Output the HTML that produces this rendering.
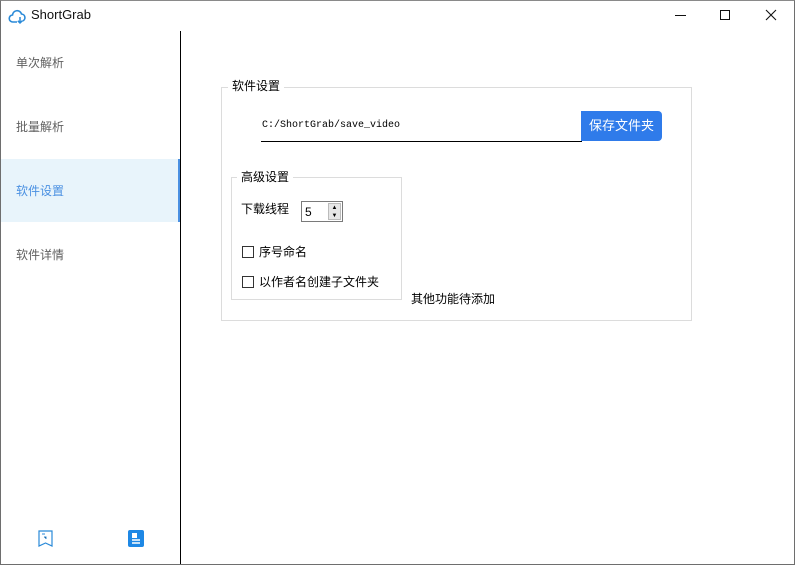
<!DOCTYPE html>
<html><head><meta charset="utf-8"><style>
*{margin:0;padding:0;box-sizing:border-box}
body{width:795px;height:565px;background:#fff;position:relative;overflow:hidden;font-family:"Liberation Sans","Noto Sans CJK SC",sans-serif;font-size:12px;color:#000;line-height:1.2}
.frame{position:absolute;left:0;top:0;width:795px;height:565px;border:1px solid #6e6e6e;border-top:1px solid #8a8a8a}
.abs{position:absolute}
.nav{position:absolute;left:16px;font-size:12px;color:#606060}
</style></head><body>
<div class="frame"></div>
<svg class="abs" style="left:8px;top:7px" width="18" height="18" viewBox="0 0 18 18"><path d="M9 15H5a3.5 3.5 0 0 1-.5-7A4.6 4.6 0 0 1 13.5 7a3.6 3.6 0 0 1 1 7" fill="none" stroke="#2a8ad8" stroke-width="1.6"/><path d="M12 10v6M9.8 13.8 12 16l2.2-2.2" fill="none" stroke="#2a8ad8" stroke-width="1.5"/></svg>
<div class="abs" style="left:31px;top:7px;font-size:13px;color:#111">ShortGrab</div>
<div class="abs" style="left:675px;top:15px;width:11px;height:1px;background:#111"></div>
<div class="abs" style="left:720px;top:10px;width:10px;height:10px;border:1px solid #111"></div>
<svg class="abs" style="left:765px;top:9px" width="12" height="12"><path d="M1 1 11 11M11 1 1 11" stroke="#111" stroke-width="1.1"/></svg>
<div class="abs" style="left:180px;top:31px;width:1px;height:533px;background:#000"></div>
<div class="nav" style="top:56px">单次解析</div>
<div class="nav" style="top:120px">批量解析</div>
<div class="abs" style="left:1px;top:159px;width:177px;height:63px;background:#e8f4fb"></div>
<div class="abs" style="left:178px;top:159px;width:2px;height:63px;background:#4a90e2"></div>
<div class="nav" style="top:184px;color:#4a90e2">软件设置</div>
<div class="nav" style="top:248px">软件详情</div>
<svg class="abs" style="left:38px;top:530px" width="15" height="17" viewBox="0 0 15 17"><path d="M1 1h13v15l-6.5-3L1 16z" fill="none" stroke="#2a8ad8" stroke-width="1.2"/><path d="M4 4h3M6 7h2v2" stroke="#2a8ad8" stroke-width="1"/></svg>
<svg class="abs" style="left:128px;top:530px" width="16" height="17" viewBox="0 0 16 17"><rect x="0" y="0" width="16" height="17" rx="2" fill="#1e88e5"/><rect x="4" y="3" width="5" height="5" fill="#fff"/><path d="M4 10h8M4 13h8" stroke="#fff" stroke-width="1.5"/></svg>
<div class="abs" style="left:221px;top:87px;width:471px;height:234px;border:1px solid #dcdcdc"></div>
<div class="abs" style="left:228px;top:79px;background:#fff;padding:0 4px">软件设置</div>
<div class="abs" style="left:262px;top:120px;font-family:'Liberation Mono',monospace;font-size:10px">C:/ShortGrab/save_video</div>
<div class="abs" style="left:261px;top:141px;width:321px;height:1px;background:#000"></div>
<div class="abs" style="left:581px;top:111px;width:81px;height:30px;background:#2f7bea;border-radius:0 4px 4px 0;color:#fff;font-size:13px;line-height:30px;text-align:center">保存文件夹</div>
<div class="abs" style="left:231px;top:177px;width:171px;height:123px;border:1px solid #dcdcdc"></div>
<div class="abs" style="left:237px;top:170px;background:#fff;padding:0 4px">高级设置</div>
<div class="abs" style="left:241px;top:202px">下载线程</div>
<div class="abs" style="left:301px;top:201px;width:42px;height:21px;border:1px solid #7a7a7a;background:#fff"><span style="position:absolute;left:3px;top:3px;font-size:12px">5</span><div style="position:absolute;right:1px;top:1px;width:13px;height:17px;background:#e6e6e6;border:1px solid #bbb;font-size:6px;line-height:8px;text-align:center">▲<br>▼</div></div>
<div class="abs" style="left:242px;top:246px;width:12px;height:12px;border:1px solid #333"></div>
<div class="abs" style="left:259px;top:245px">序号命名</div>
<div class="abs" style="left:242px;top:276px;width:12px;height:12px;border:1px solid #333"></div>
<div class="abs" style="left:259px;top:275px">以作者名创建子文件夹</div>
<div class="abs" style="left:411px;top:292px">其他功能待添加</div>
</body></html>
